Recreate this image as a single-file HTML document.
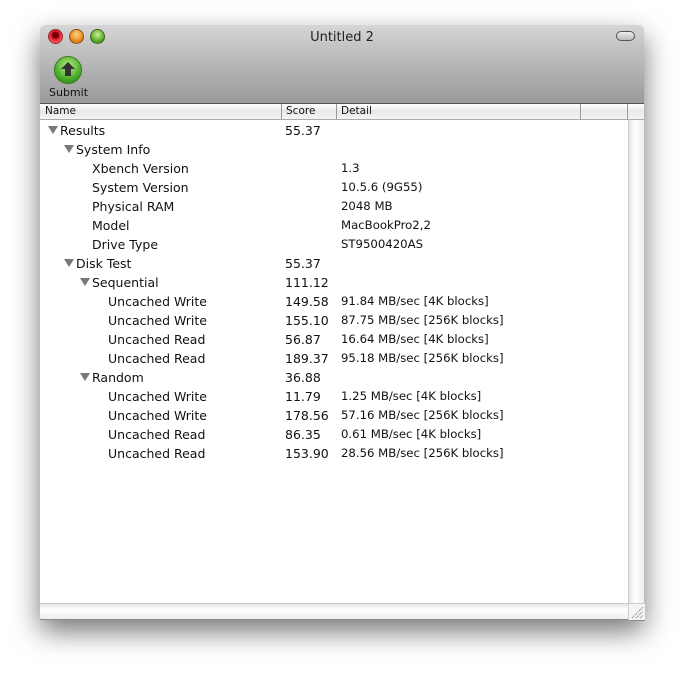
<!DOCTYPE html>
<html><head><style>
body{margin:0;width:684px;height:674px;background:#fff;position:relative;overflow:hidden;font-family:"DejaVu Sans","Liberation Sans",sans-serif;}
.win{position:absolute;left:40px;top:25px;width:604px;height:594px;box-shadow:0 12px 28px rgba(0,0,0,.55);border-radius:5px 5px 0 0;background:#fff;}
.tb{position:absolute;left:0;top:0;width:604px;height:78px;border-radius:5px 5px 0 0;background:linear-gradient(#d6d6d6,#c2c2c2 30%,#9a9a9a);border-bottom:1px solid #555;}
.btn{position:absolute;top:4px;width:13px;height:13px;border-radius:50%;border:1px solid rgba(0,0,0,.4);}
.title{position:absolute;left:0;width:604px;top:5px;text-align:center;font-size:13px;color:#222;}
.hdr{position:absolute;left:0;top:79px;width:604px;height:15px;background:linear-gradient(#fff,#e8e8e8 50%,#f4f4f4);border-bottom:1px solid #aaa;font-size:10.5px;color:#111;}
.hdr div{position:absolute;top:0;height:15px;line-height:15px;border-left:1px solid #999;padding-left:4px;}
.r{position:absolute;font-size:12.5px;color:#111;white-space:nowrap;line-height:19px;height:19px;}
.d{font-size:11.7px;}
.tri{position:absolute;width:0;height:0;border-left:5px solid transparent;border-right:5px solid transparent;border-top:8px solid #777;}
.vs{position:absolute;left:588px;top:95px;width:15px;height:484px;background:linear-gradient(90deg,#e6e6e6,#fff 40%,#eee);border-left:1px solid #ccc;}
.hs{position:absolute;left:0;top:578px;width:588px;height:15px;background:linear-gradient(#e6e6e6,#fff 40%,#eee);border-top:1px solid #ccc;border-bottom:1px solid #888;}
.gr{position:absolute;left:588px;top:578px;width:16px;height:16px;background:#f4f4f4;border-left:1px solid #ccc;border-top:1px solid #ccc;border-bottom:1px solid #888;}
</style></head><body>
<div class="win">
<div class="tb">
<div class="btn" style="left:8px;background:radial-gradient(circle at 50% 40%,#6a0000 25%,#e23 45%,#f88)"></div>
<div class="btn" style="left:29px;background:radial-gradient(circle at 50% 35%,#ffd080,#e08010 70%)"></div>
<div class="btn" style="left:50px;background:radial-gradient(circle at 50% 35%,#c8f090,#50a020 70%)"></div>
<div class="title">Untitled 2</div>
<div style="position:absolute;left:576px;top:6px;width:17px;height:8px;border:1px solid #555;border-radius:5px;background:linear-gradient(#eee,#bbb)"></div>
<div style="position:absolute;left:14px;top:31px;width:26px;height:26px;border-radius:50%;background:radial-gradient(circle at 50% 35%,#b8f080,#3aa020 70%,#2a7a10);border:1px solid #3a7a20"></div>
<svg style="position:absolute;left:20px;top:36px" width="16" height="17"><path d="M8 1 L15 8 L11 8 L11 15 L5 15 L5 8 L1 8 Z" fill="#333"/></svg>
<div style="position:absolute;left:9px;top:61px;font-size:11px;color:#111">Submit</div>
</div>
<div class="hdr"><div style="left:0;border:none;padding-left:5px">Name</div><div style="left:241px">Score</div><div style="left:296px">Detail</div><div style="left:540px;width:46px"></div><div style="left:587px"></div></div>
<div class="vs"></div><div class="hs"></div>
<div class="gr"><svg width="15" height="15"><path d="M3 14L14 3M7 14L14 7M11 14L14 11" stroke="#777" stroke-dasharray="1 1"/></svg></div>
</div>
<div class="tri" style="left:48px;top:126px"></div><div class="r" style="left:60px;top:121px">Results</div><div class="r" style="left:285px;top:121px">55.37</div>
<div class="tri" style="left:64px;top:145px"></div><div class="r" style="left:76px;top:140px">System Info</div>
<div class="r" style="left:92px;top:159px">Xbench Version</div><div class="r d" style="left:341px;top:159px">1.3</div>
<div class="r" style="left:92px;top:178px">System Version</div><div class="r d" style="left:341px;top:178px">10.5.6 (9G55)</div>
<div class="r" style="left:92px;top:197px">Physical RAM</div><div class="r d" style="left:341px;top:197px">2048 MB</div>
<div class="r" style="left:92px;top:216px">Model</div><div class="r d" style="left:341px;top:216px">MacBookPro2,2</div>
<div class="r" style="left:92px;top:235px">Drive Type</div><div class="r d" style="left:341px;top:235px">ST9500420AS</div>
<div class="tri" style="left:64px;top:259px"></div><div class="r" style="left:76px;top:254px">Disk Test</div><div class="r" style="left:285px;top:254px">55.37</div>
<div class="tri" style="left:80px;top:278px"></div><div class="r" style="left:92px;top:273px">Sequential</div><div class="r" style="left:285px;top:273px">111.12</div>
<div class="r" style="left:108px;top:292px">Uncached Write</div><div class="r" style="left:285px;top:292px">149.58</div><div class="r d" style="left:341px;top:292px">91.84 MB/sec [4K blocks]</div>
<div class="r" style="left:108px;top:311px">Uncached Write</div><div class="r" style="left:285px;top:311px">155.10</div><div class="r d" style="left:341px;top:311px">87.75 MB/sec [256K blocks]</div>
<div class="r" style="left:108px;top:330px">Uncached Read</div><div class="r" style="left:285px;top:330px">56.87</div><div class="r d" style="left:341px;top:330px">16.64 MB/sec [4K blocks]</div>
<div class="r" style="left:108px;top:349px">Uncached Read</div><div class="r" style="left:285px;top:349px">189.37</div><div class="r d" style="left:341px;top:349px">95.18 MB/sec [256K blocks]</div>
<div class="tri" style="left:80px;top:373px"></div><div class="r" style="left:92px;top:368px">Random</div><div class="r" style="left:285px;top:368px">36.88</div>
<div class="r" style="left:108px;top:387px">Uncached Write</div><div class="r" style="left:285px;top:387px">11.79</div><div class="r d" style="left:341px;top:387px">1.25 MB/sec [4K blocks]</div>
<div class="r" style="left:108px;top:406px">Uncached Write</div><div class="r" style="left:285px;top:406px">178.56</div><div class="r d" style="left:341px;top:406px">57.16 MB/sec [256K blocks]</div>
<div class="r" style="left:108px;top:425px">Uncached Read</div><div class="r" style="left:285px;top:425px">86.35</div><div class="r d" style="left:341px;top:425px">0.61 MB/sec [4K blocks]</div>
<div class="r" style="left:108px;top:444px">Uncached Read</div><div class="r" style="left:285px;top:444px">153.90</div><div class="r d" style="left:341px;top:444px">28.56 MB/sec [256K blocks]</div>
</body></html>
